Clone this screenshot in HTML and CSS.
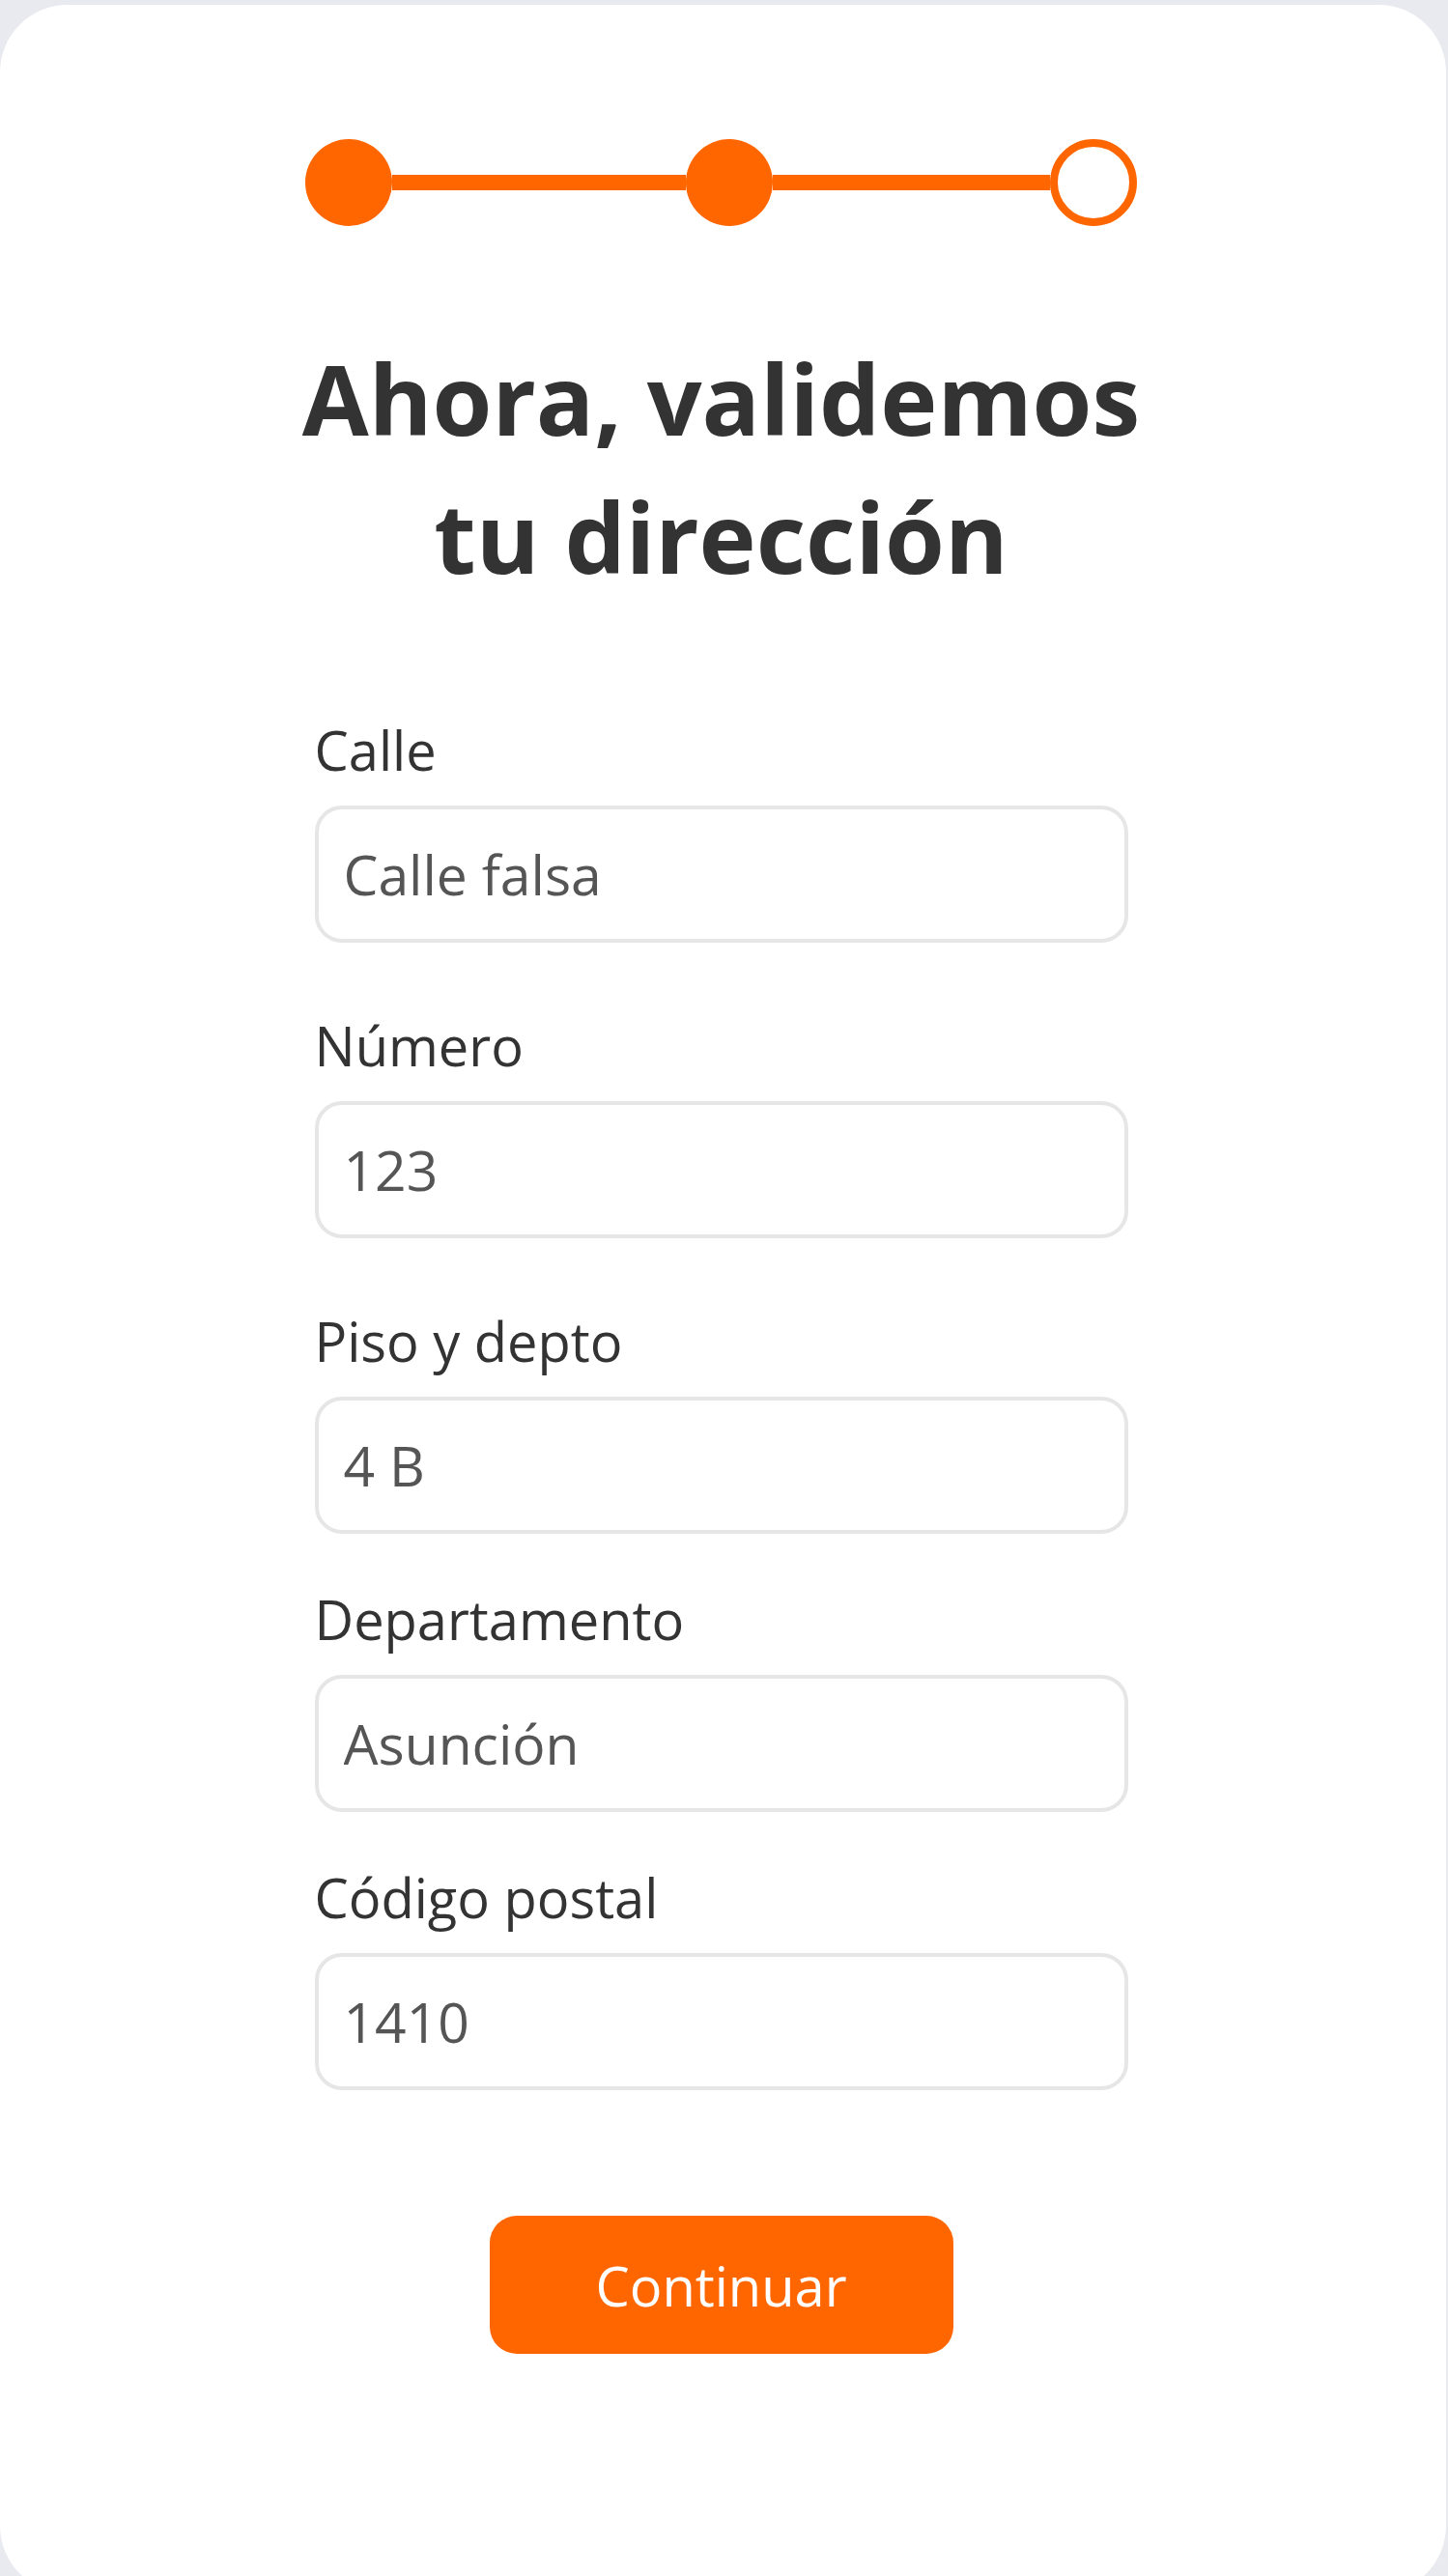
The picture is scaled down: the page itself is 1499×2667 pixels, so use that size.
FILE: index.html
```html
<!DOCTYPE html>
<html lang="es">
<head>
<meta charset="utf-8">
<title>Ahora, validemos tu dirección</title>
<link rel="stylesheet" href="styles.css">
</head>
<body>
<main class="card">
  <div class="stepper">
    <span class="step step-done"></span>
    <span class="seg seg-1"></span>
    <span class="step step-done"></span>
    <span class="seg seg-2"></span>
    <span class="step step-current"></span>
  </div>

  <h1 class="title">Ahora, validemos<br>tu dirección</h1>

  <form class="form">
    <div class="field field-spaced">
      <label class="label" for="calle">Calle</label>
      <input class="input" id="calle" type="text" value="Calle falsa">
    </div>
    <div class="field field-spaced">
      <label class="label" for="numero">Número</label>
      <input class="input" id="numero" type="text" value="123">
    </div>
    <div class="field">
      <label class="label" for="piso">Piso y depto</label>
      <input class="input" id="piso" type="text" value="4 B">
    </div>
    <div class="field">
      <label class="label" for="depto">Departamento</label>
      <input class="input" id="depto" type="text" value="Asunción">
    </div>
    <div class="field">
      <label class="label" for="cp">Código postal</label>
      <input class="input" id="cp" type="text" value="1410">
    </div>
    <div class="actions">
      <button class="button" type="button">Continuar</button>
    </div>
  </form>
</main>
</body>
</html>
```

FILE: styles.css
```css
* {
  box-sizing: border-box;
}

html, body {
  margin: 0;
  padding: 0;
}

body {
  background: #e9eaef;
  font-family: "Open Sans", "Noto Sans", sans-serif;
  color: #333333;
  height: 2667px;
  overflow: hidden;
}

.card {
  margin: 5px 2px 0 0;
  height: 2680px;
  background: #ffffff;
  border-radius: 70px;
  padding: 139px 4px 0 0;
  display: flex;
  flex-direction: column;
  align-items: center;
}

.stepper {
  display: flex;
  align-items: center;
  width: 861px;
  height: 90px;
}

.step {
  flex: none;
  width: 90px;
  height: 90px;
  border-radius: 50%;
}

.step-done {
  background: #ff6600;
}

.step-current {
  background: #ffffff;
  border: 8px solid #ff6600;
}

.seg {
  flex: none;
  height: 16px;
  background: #ff6600;
}

.seg-1 {
  width: 304px;
}

.seg-2 {
  width: 287px;
}

.title {
  margin: 107px 0 0;
  font-size: 100px;
  line-height: 143px;
  font-weight: 700;
  text-align: center;
  color: #333333;
}

.form {
  width: 842px;
  margin-top: 111px;
  display: flex;
  flex-direction: column;
}

.field {
  display: flex;
  flex-direction: column;
  margin-bottom: 50px;
}

.field-spaced {
  margin-bottom: 68px;
}

.label {
  font-size: 56px;
  line-height: 76px;
  color: #333333;
  margin-bottom: 20px;
}

.input {
  height: 142px;
  width: 100%;
  border: 4px solid #e6e6e6;
  border-radius: 28px;
  padding: 0 24px 0 26px;
  font-family: "Open Sans", "Noto Sans", sans-serif;
  font-size: 57px;
  color: #555555;
  background: #ffffff;
  outline: none;
}

.actions {
  display: flex;
  justify-content: center;
  margin-top: 80px;
}

.button {
  width: 480px;
  height: 143px;
  border: none;
  border-radius: 28px;
  background: #ff6600;
  color: #ffffff;
  font-family: "Open Sans", "Noto Sans", sans-serif;
  font-size: 56px;
  cursor: pointer;
}
```
